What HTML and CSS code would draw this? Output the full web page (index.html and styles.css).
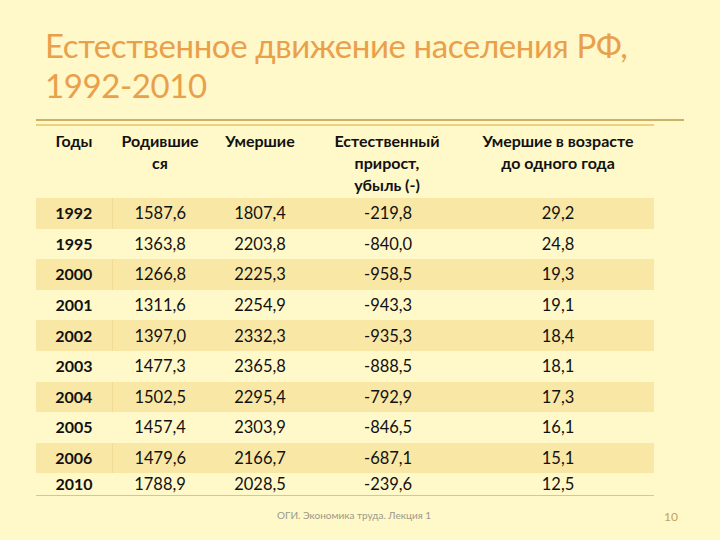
FILE: index.html
```html
<!DOCTYPE html>
<html lang="ru">
<head>
<meta charset="utf-8">
<title>Естественное движение населения РФ</title>
<link rel="stylesheet" href="styles.css">
</head>
<body>
<div class="slide">
  <h1 class="title">Естественное движение населения РФ,<br>1992-2010</h1>
  <div class="rule"></div>
  <table class="data">
    <colgroup>
      <col class="w1"><col class="w2"><col class="w3"><col class="w4"><col class="w5">
    </colgroup>
    <thead>
      <tr>
        <th>Годы</th>
        <th>Родившие<br>ся</th>
        <th>Умершие</th>
        <th>Естественный<br>прирост,<br>убыль (-)</th>
        <th>Умершие в возрасте<br>до одного года</th>
      </tr>
    </thead>
    <tbody>
      <tr class="band"><td class="c1">1992</td><td>1587,6</td><td>1807,4</td><td class="c4">-219,8</td><td>29,2</td></tr>
      <tr><td class="c1">1995</td><td>1363,8</td><td>2203,8</td><td class="c4">-840,0</td><td>24,8</td></tr>
      <tr class="band"><td class="c1">2000</td><td>1266,8</td><td>2225,3</td><td class="c4">-958,5</td><td>19,3</td></tr>
      <tr><td class="c1">2001</td><td>1311,6</td><td>2254,9</td><td class="c4">-943,3</td><td>19,1</td></tr>
      <tr class="band"><td class="c1">2002</td><td>1397,0</td><td>2332,3</td><td class="c4">-935,3</td><td>18,4</td></tr>
      <tr><td class="c1">2003</td><td>1477,3</td><td>2365,8</td><td class="c4">-888,5</td><td>18,1</td></tr>
      <tr class="band"><td class="c1">2004</td><td>1502,5</td><td>2295,4</td><td class="c4">-792,9</td><td>17,3</td></tr>
      <tr><td class="c1">2005</td><td>1457,4</td><td>2303,9</td><td class="c4">-846,5</td><td>16,1</td></tr>
      <tr class="band"><td class="c1">2006</td><td>1479,6</td><td>2166,7</td><td class="c4">-687,1</td><td>15,1</td></tr>
      <tr class="last"><td class="c1">2010</td><td>1788,9</td><td>2028,5</td><td class="c4">-239,6</td><td>12,5</td></tr>
    </tbody>
  </table>
  <div class="footer">
    <span class="foot-text">ОГИ. Экономика труда. Лекция 1</span>
    <span class="page">10</span>
  </div>
</div>
</body>
</html>
```

FILE: styles.css
```css
html, body {
  margin: 0;
  padding: 0;
}
body {
  background: #fff8c8;
  font-family: Lato, "Open Sans", "Noto Sans", sans-serif;
}
.slide {
  width: 720px;
  height: 540px;
  box-sizing: border-box;
  padding-top: 25px;
  overflow: hidden;
}
.title {
  margin: 0 0 0 45px;
  font-weight: 400;
  font-size: 33px;
  line-height: 40px;
  color: #e9a04c;
  letter-spacing: -0.4px;
}
.rule {
  margin: 14px 0 0 36px;
  width: 648px;
  height: 2px;
  background: #c9b26a;
}
.data {
  margin: 3px 0 0 36px;
  width: 618px;
  table-layout: fixed;
  border-collapse: collapse;
  border-top: 2px solid #ecd27e;
  border-bottom: 1px solid #e6c66a;
  color: #111;
}
.w1 { width: 76px; }
.w2 { width: 96px; }
.w3 { width: 104px; }
.w4 { width: 150px; }
.w5 { width: 192px; }
.data th {
  height: 68px;
  vertical-align: top;
  padding: 4px 0 0;
  font-size: 16px;
  line-height: 22px;
  font-weight: 700;
  text-align: center;
  white-space: nowrap;
}
.data td {
  height: 30.6px;
  padding: 0;
  font-size: 16.5px;
  line-height: 30px;
  text-align: center;
}
.data td.c1 { font-weight: 700; font-size: 16px; }
.data td.c4 { text-align: left; padding-left: 52px; }
.band td { background: #f9e7a5; }
.band td.c1 { border-right: 1px solid #f2dc95; }
.data tr.last td {
  height: 22px;
  line-height: 22px;
  vertical-align: bottom;
}
.footer {
  position: relative;
  margin-top: 13px;
  height: 20px;
  font-size: 10px;
  color: #9a9a8a;
}
.foot-text {
  position: absolute;
  left: 277px;
  top: 0;
}
.page {
  position: absolute;
  left: 664px;
  top: 0;
  font-size: 12px;
  color: #c2a35a;
}
```
